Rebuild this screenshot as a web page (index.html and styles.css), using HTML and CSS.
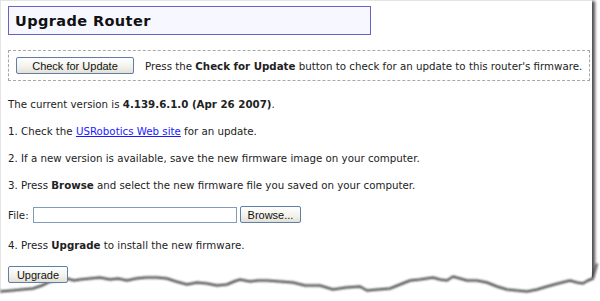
FILE: index.html
```html
<!DOCTYPE html>
<html lang="en">

<head>
	<meta charset="utf-8">
	<title>Upgrade Router</title>
	<link rel="stylesheet" href="styles.css">
</head>

<body>
	<section class="sheet">
		<h1 class="title">Upgrade Router</h1>

		<div class="check">
			<button class="knap knap-check">Check for Update</button>
			<span>Press the <b>Check for Update</b> button to check for an update to this router's firmware.</span>
		</div>

		<p>The current version is <b>4.139.6.1.0 (Apr 26 2007)</b>.</p>
		<p>1. Check the <a href="#">USRobotics Web site</a> for an update.</p>
		<p>2. If a new version is available, save the new firmware image on your computer.</p>
		<p>3. Press <b>Browse</b> and select the new firmware file you saved on your computer.</p>

		<div class="fil">
			<label>File:</label>
			<span class="felt"></span>
			<button class="knap knap-browse">Browse...</button>
		</div>

		<p>4. Press <b>Upgrade</b> to install the new firmware.</p>

		<button class="knap knap-upgrade">Upgrade</button>

		<!-- revet kant nederst -->
		<svg class="rift" width="600" height="44" viewBox="0 261 600 44">
			<defs>
				<filter id="blur" x="-5%" y="-50%" width="110%" height="200%">
					<feGaussianBlur stdDeviation="1" />
				</filter>
			</defs>
			<polygon class="rift-bund"
				points="0,290 12,289 22,288 33,287 42,284 50,280 58,279 67,277 74,279 80,278 90,277 100,276 110,278 118,277 127,279 136,277 146,276 157,276 167,277 176,280 187,283 197,281 207,282 217,284 227,283 234,280 240,278 250,280 258,279 267,279 280,280 293,281 305,284 320,284 333,288 346,286 360,285 367,289 378,288 390,287 400,283 410,279 420,278 433,276 440,278 447,279 453,275 460,277 467,279 477,279 487,281 497,285 507,288 517,289 527,290 537,288 547,285 558,282 570,279 577,281 583,282 588,279 593,277 597,262 600,262 600,305 0,305" />
			<polyline class="rift-skygge" filter="url(#blur)" transform="translate(0 1.5)"
				points="0,290 12,289 22,288 33,287 42,284 50,280 58,279 67,277 74,279 80,278 90,277 100,276 110,278 118,277 127,279 136,277 146,276 157,276 167,277 176,280 187,283 197,281 207,282 217,284 227,283 234,280 240,278 250,280 258,279 267,279 280,280 293,281 305,284 320,284 333,288 346,286 360,285 367,289 378,288 390,287 400,283 410,279 420,278 433,276 440,278 447,279 453,275 460,277 467,279 477,279 487,281 497,285 507,288 517,289 527,290 537,288 547,285 558,282 570,279 577,281 583,282 588,279 593,277 597,262" />
		</svg>
	</section>
</body>

</html>
```

FILE: styles.css
```css
body {
	margin: 0px;
	background-color: white;
	font-family: "DejaVu Sans", Verdana, sans-serif;
	font-size: 10.25px;
	color: #222;
}

/*____________________Arket____________________*/

.sheet {
	position: relative;
	width: 592px;
	height: 301px;
	padding: 5px 0 0 7px;
	box-sizing: border-box;
	border-left: 1px solid #e4e4e4;
	border-top: 1px solid #e4e4e4;
	box-shadow: 3px 1px 3px rgba(0, 0, 0, 0.7);
}

/*____________________Overskrift____________________*/

.title {
	margin: 0;
	width: 363px;
	height: 29px;
	box-sizing: border-box;
	border: 1px solid #6a62c0;
	background-color: #f7f7ff;
	padding: 6px 0 0 6px;
	font-size: 14.5px;
	letter-spacing: 0.4px;
	color: #111;
}

/*____________________Check boks____________________*/

.check {
	margin-top: 15px;
	width: 582px;
	height: 31px;
	box-sizing: border-box;
	border: 1px dashed #a8a8a8;
	display: flex;
	align-items: center;
	gap: 11px;
	padding-left: 7px;
}

.knap {
	font-family: "Liberation Sans", Tahoma, sans-serif;
	font-size: 11px;
	color: #111;
	height: 17px;
	padding: 0;
	border: 1px solid #5f7fa8;
	border-radius: 2px;
	background: linear-gradient(#ffffff, #f2f1ea 60%, #e3e1d6);
}

.knap-check {
	width: 118px;
}

/*____________________Tekst____________________*/

p {
	margin: 0;
	margin-top: 14px;
	line-height: 13px;
}

.check + p {
	margin-top: 17px;
}

a {
	color: #1a1aff;
}

/*____________________Fil____________________*/

.fil {
	margin-top: 14px;
	display: flex;
	align-items: center;
	height: 17px;
}

.fil label {
	width: 25px;
}

.felt {
	width: 202px;
	height: 14px;
	border: 1px solid #7f9db9;
	background: white;
}

.knap-browse {
	margin-left: 3px;
	width: 61px;
}

.fil + p {
	margin-top: 16px;
}

.knap-upgrade {
	margin-top: 14px;
	width: 60px;
	display: block;
	position: relative;
	z-index: 1;
}

/*____________________Revet kant____________________*/

.rift {
	position: absolute;
	left: -1px;
	top: 260px;
	pointer-events: none;
}

.rift-skygge {
	fill: none;
	stroke: #333;
	stroke-width: 2;
}

.rift-bund {
	fill: white;
}
```
